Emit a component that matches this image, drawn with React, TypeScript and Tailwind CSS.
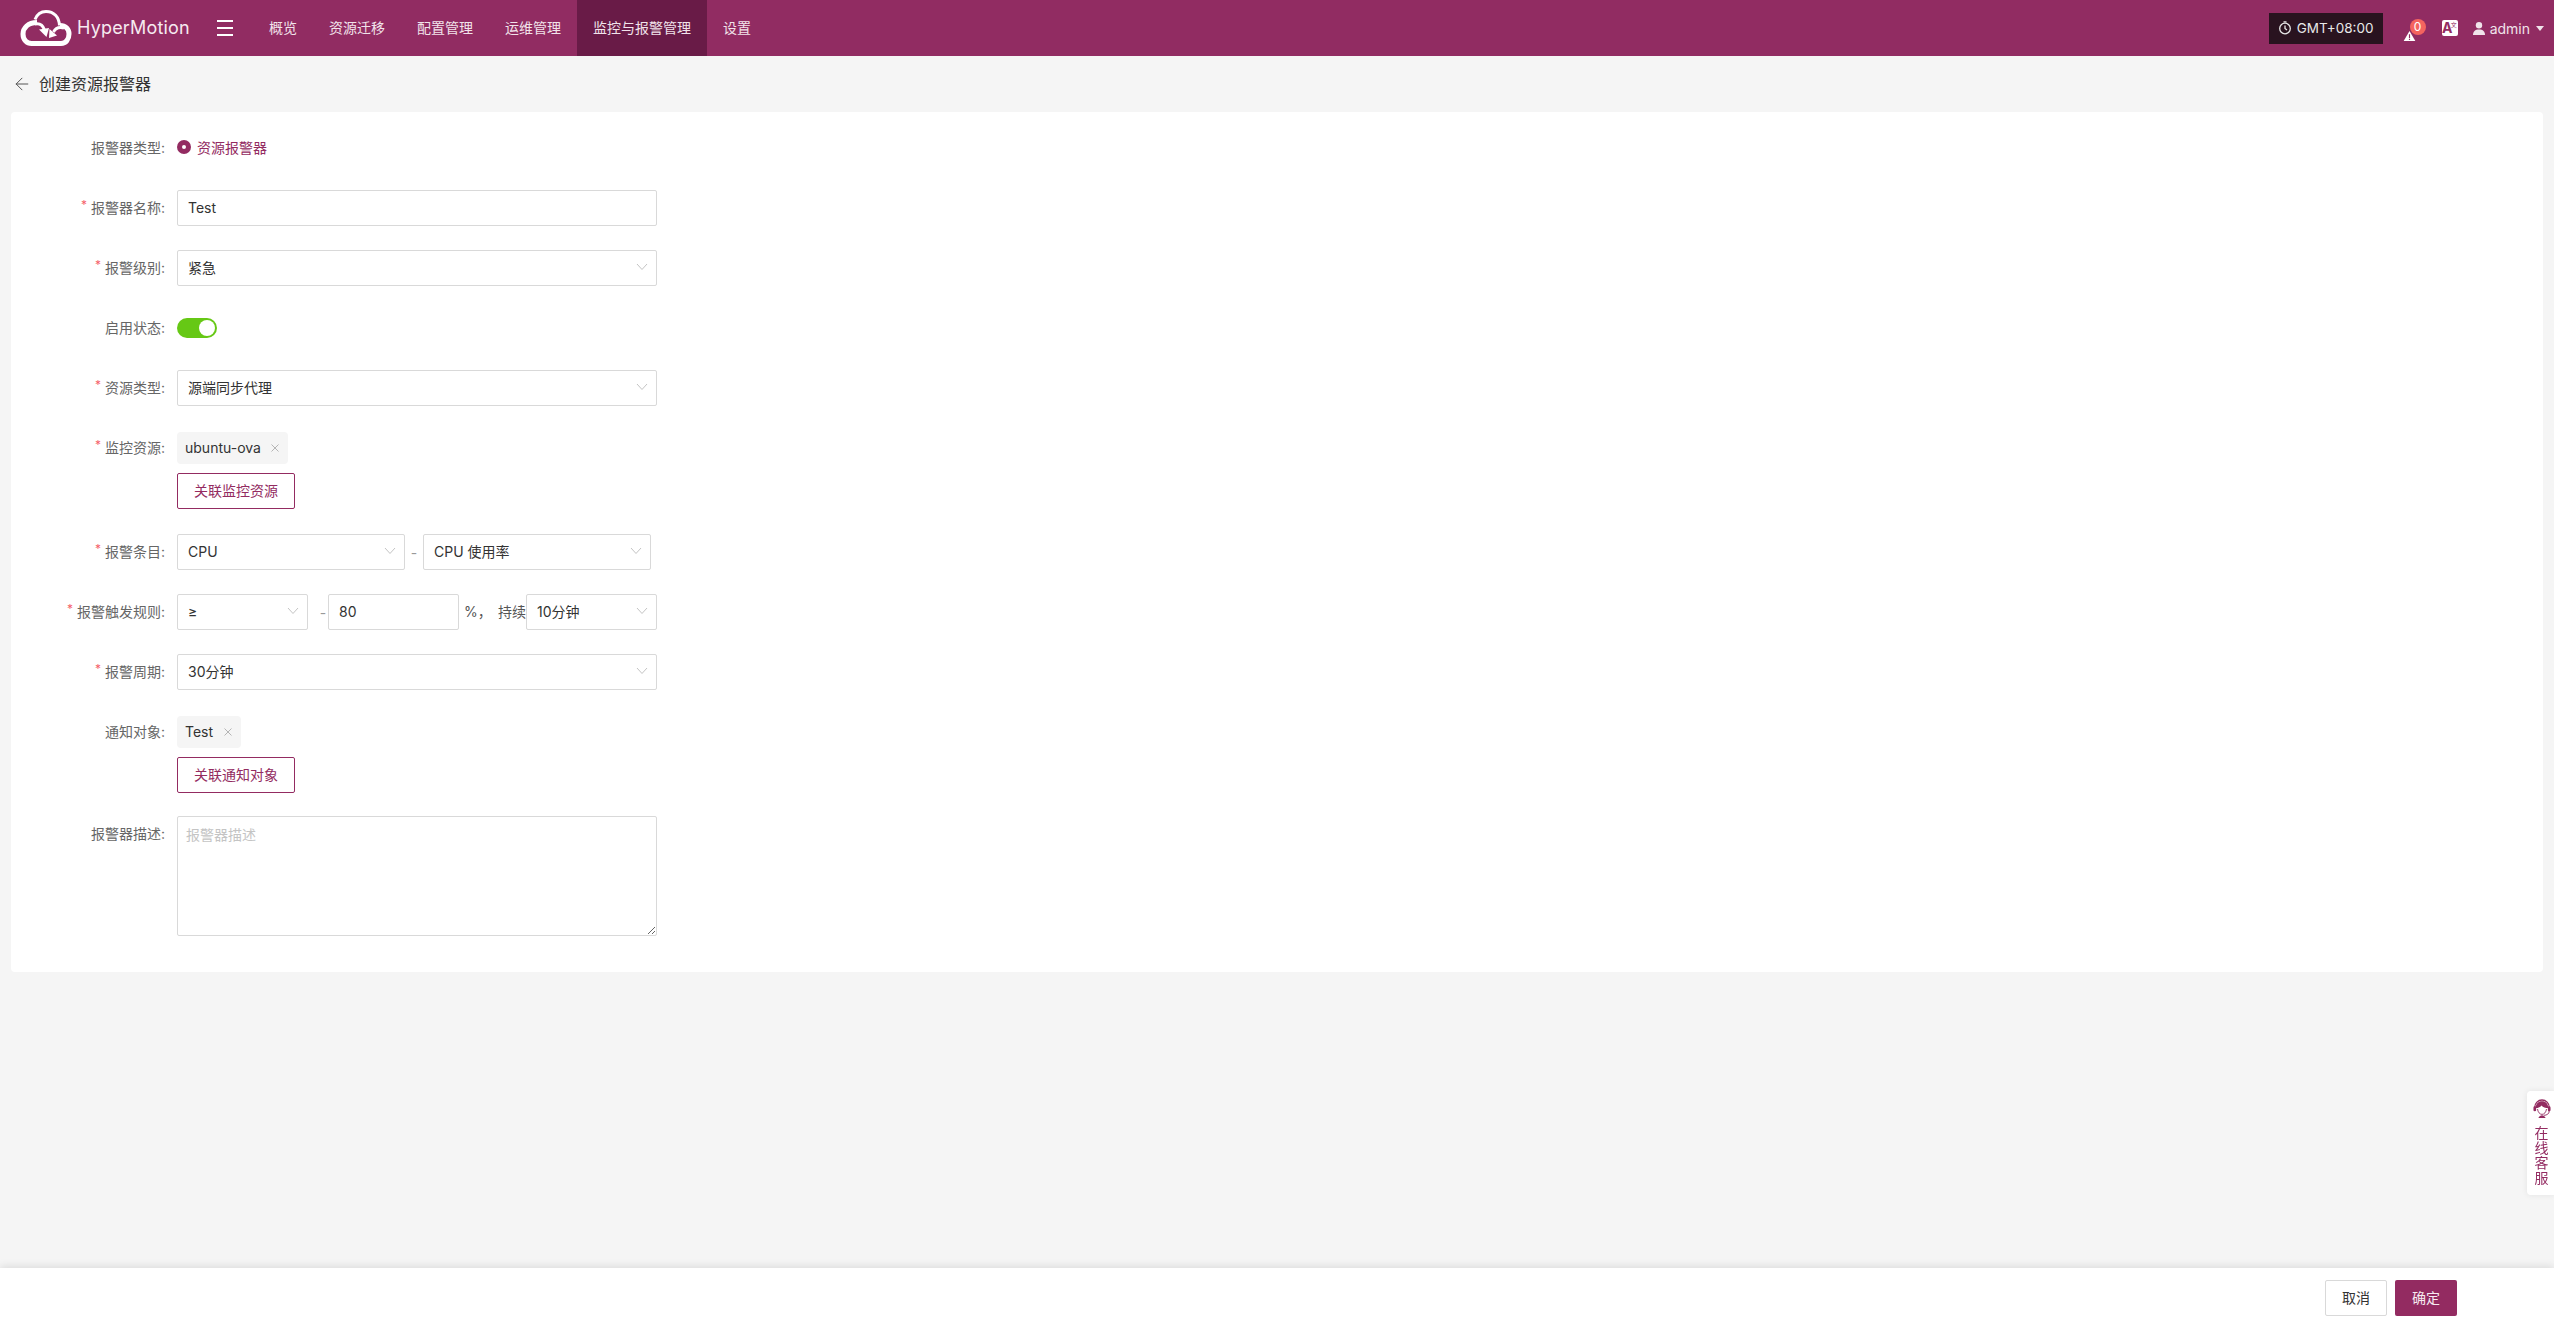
import { ArrowLeft } from 'lucide-react'
import type { ReactNode } from 'react'

const NAV = ['概览', '资源迁移', '配置管理', '运维管理', '监控与报警管理', '设置']

function Chevron() {
  return (
    <svg width="12" height="8" viewBox="0 0 12 8" fill="none" stroke="#c4c4c4" strokeWidth="1" className="absolute right-[8px] top-[12px]">
      <path d="M1 1l5 5.5L11 1" />
    </svg>
  )
}

function Select({ value, width = 'w-[480px]' }: { value: string; width?: string }) {
  return (
    <div className={`relative flex h-9 shrink-0 items-center rounded-[2px] border border-[#d9d9d9] bg-white pb-[2px] pl-[10px] text-[#333] ${width}`}>
      {value}
      <Chevron />
    </div>
  )
}

function Tag({ text, width }: { text: string; width: string }) {
  return (
    <div className={`mt-[2px] flex h-8 items-center justify-between rounded-[4px] bg-[#f5f5f5] pl-2 pr-[8px] text-[#333] ${width}`}>
      <span className="-mt-[2px]">{text}</span>
      <svg width="10" height="10" viewBox="0 0 10 10" stroke="#b5b5b5" strokeWidth="1">
        <path d="M1.5 1.5l7 7M8.5 1.5l-7 7" />
      </svg>
    </div>
  )
}

function LinkButton({ text }: { text: string }) {
  return (
    <div className="mt-[9px] flex h-9 w-[118px] items-center justify-center rounded-[2px] border border-[#932b61] bg-white pb-[1px] text-[#932b61]">
      {text}
    </div>
  )
}

function Row({ label, required, children, className }: { label: string; required?: boolean; children: ReactNode; className?: string }) {
  return (
    <div className={`flex items-start ${className ?? 'mb-6'}`}>
      <div className="flex h-9 w-[154px] items-center justify-end pb-[2px] text-[#666]">
        {required && <span className="relative -top-[2px] mr-[4px] text-[12px] text-[#f5616a]">*</span>}
        {label}:
      </div>
      <div className="ml-3">{children}</div>
    </div>
  )
}

function Logo() {
  return (
    <svg width="52" height="37" viewBox="0 0 52 37" fill="none" stroke="#fff" className="shrink-0">
      {/* cloud body, open at the top between the two lobes */}
      <path d="M17 12.500C8 12.500 3 18 3 24c0 6 4 9.500 8.500 9.500H41c5 0 8-4.500 8-9.500 0-5-3.500-8.500-9-8.500" strokeWidth="5" />
      {/* top arc */}
      <path d="M15 9.500C17 4.500 21 1.500 26 1.500c8 0 13 5.500 13.500 14" strokeWidth="3" />
      {/* left swirl and arrow head */}
      <path d="M15 14c5-1 8 1.500 9.500 6" strokeWidth="3" />
      <path d="M19 19.500l10-1.500-2.500 9z" fill="#fff" stroke="none" />
      {/* right swirl and arrow head */}
      <path d="M44 18c-5-1.500-8.500 0-10.500 4" strokeWidth="3" />
      <path d="M29.500 19l7.500 6.500-8 2.500z" fill="#fff" stroke="none" />
    </svg>
  )
}

function AgentIcon() {
  return (
    <svg width="18" height="20" viewBox="0 0 20 22" fill="none" className="ml-[1px] shrink-0">
      <path d="M2 9a8 8 0 0 1 16 0" stroke="#932b61" strokeWidth="1.500" />
      <path d="M3 10C3 5.500 6 2.500 10 2.500s7 3 7 7.500c-3 0-6-.8-7.500-3C8.500 8.500 6 10 3 10z" fill="#932b61" />
      <rect x="0.500" y="8" width="3" height="5.500" rx="1.500" fill="#932b61" />
      <rect x="16.500" y="8" width="3" height="5.500" rx="1.500" fill="#932b61" />
      <path d="M5 11c.5 3.500 2.500 6 5 6s4.500-2.500 5-6" stroke="#932b61" strokeWidth="1" />
      <path d="M18 13c0 3.500-2.500 5-6 5" stroke="#932b61" strokeWidth="1" />
      <path d="M6 21c1-2 2.500-3 4-3s3 1 4 3z" fill="#932b61" />
    </svg>
  )
}

function HeaderRight() {
  return (
    <div className="ml-auto flex items-center">
      <div className="flex h-[31px] w-[114px] items-center justify-center gap-[5px] bg-[#29131f] text-[#e8e8e8]">
        <svg width="14" height="14" viewBox="0 0 14 14" fill="none" stroke="#e8e8e8" strokeWidth="1.300">
          <circle cx="7" cy="7.500" r="5.300" />
          <path d="M7 4.500v3l2 1.500M5.500 .8h3" />
        </svg>
        <span className="text-[13.500px]">GMT+08:00</span>
      </div>
      <div className="relative ml-[20px] h-4 w-[12px]">
        <svg width="13" height="10" viewBox="0 0 14 12" className="absolute bottom-[-5px] left-0">
          <path d="M7 0l7 12H0z" fill="#fff" />
          <path d="M6.300 4h1.400v4.500H6.300zM6.300 9.300h1.400v1.400H6.300z" fill="#932b61" />
        </svg>
        <span className="absolute -top-[1px] left-[7px] flex h-4 w-4 items-center justify-center rounded-full bg-[#f4645f] text-[12px] leading-none text-white">0</span>
      </div>
      <div className="relative ml-[27px] flex h-4 w-4 items-center justify-center rounded-[2px] bg-white text-[14px] font-bold leading-none text-[#932b61]">
        <span className="-ml-[5px]">A</span>
        <span className="absolute right-[1px] top-[2px] text-[6px] font-normal leading-none">文</span>
      </div>
      <svg width="12" height="13" viewBox="0 0 12 13" fill="#f0e4ea" className="ml-[15px]">
        <circle cx="6" cy="3.300" r="3.200" />
        <path d="M0 13c0-3.500 2-5.500 6-5.500s6 2 6 5.500z" />
      </svg>
      <span className="ml-[5px] text-[#f0e4ea]">admin</span>
      <svg width="8" height="5" viewBox="0 0 8 5" fill="#f0e4ea" className="ml-[6px] mr-[10px]">
        <path d="M0 0h8L4 5z" />
      </svg>
    </div>
  )
}

export default function App() {
  return (
    <div className="flex h-screen flex-col overflow-hidden bg-[#f5f5f5] font-['Inter','Noto_Sans_CJK_SC',sans-serif] text-[14px]">
      {/* Top bar */}
      <header className="flex h-14 shrink-0 items-center bg-[#912c62] text-white">
        <div className="ml-5 flex w-[233px] shrink-0 items-center">
          <Logo />
          <span className="ml-[5px] -mt-[2px] text-[18px] tracking-[0.01em] text-[#f6eaf0]">HyperMotion</span>
          <div className="ml-[27px] flex h-4 w-4 shrink-0 flex-col justify-between">
            <div className="h-[2px] bg-white" />
            <div className="h-[2px] bg-white" />
            <div className="h-[2px] bg-white" />
          </div>
        </div>
        <nav className="flex h-full">
          {NAV.map((item, i) => (
            <div key={item} className={`flex h-full items-center px-4 pb-[1px] ${i === 4 ? 'bg-[#691b47]' : ''} text-[#f1e3ea]`}>
              {item}
            </div>
          ))}
        </nav>
        <HeaderRight />
      </header>

      <main className="flex-1 px-[11px]">
        <div className="flex h-14 items-center pl-[1px] text-[16px] text-[#333]">
          <ArrowLeft size={20} strokeWidth={1.200} className="text-[#555]" />
          <span className="ml-[7px]">创建资源报警器</span>
        </div>

        <div className="rounded-[4px] bg-white pb-9 pt-[18px]">
          <Row label="报警器类型">
            <div className="flex h-9 items-center pb-[2px] text-[#932b61]">
              <span className="flex h-[14px] w-[14px] items-center justify-center rounded-full bg-[#932b61]">
                <span className="h-1 w-1 rounded-full bg-white" />
              </span>
              <span className="ml-[6px]">资源报警器</span>
            </div>
          </Row>

          <Row label="报警器名称" required>
            <input
              readOnly
              value="Test"
              className="h-9 w-[480px] rounded-[2px] border border-[#d9d9d9] bg-white pb-[2px] pl-[10px] text-[#333] outline-none"
            />
          </Row>

          <Row label="报警级别" required>
            <Select value="紧急" />
          </Row>

          <Row label="启用状态">
            <div className="flex h-9 items-center">
              <div className="flex h-5 w-10 items-center justify-end rounded-full bg-[#66c815] pr-[2px]">
                <div className="h-4 w-4 rounded-full bg-white" />
              </div>
            </div>
          </Row>

          <Row label="资源类型" required>
            <Select value="源端同步代理" />
          </Row>

          <Row label="监控资源" required className="mb-[25px]">
            <Tag text="ubuntu-ova" width="w-[111px]" />
            <LinkButton text="关联监控资源" />
          </Row>

          <Row label="报警条目" required>
            <div className="flex items-center">
              <Select value="CPU" width="w-[228px]" />
              <span className="w-[18px] text-center text-[#999]">-</span>
              <Select value="CPU 使用率" width="w-[228px]" />
            </div>
          </Row>

          <Row label="报警触发规则" required>
            <div className="flex items-center">
              <Select value="≥" width="w-[131px]" />
              <span className="w-[20px] pl-[10px] text-center text-[#999]">-</span>
              <input
                readOnly
                value="80"
                className="h-9 w-[131px] rounded-[2px] border border-[#d9d9d9] bg-white pb-[2px] pl-[10px] text-[#333] outline-none"
              />
              <div className="ml-[5px] flex w-[62px] shrink-0 justify-between whitespace-nowrap pb-[2px] text-[#555]">
                <span>%，</span>
                <span>持续</span>
              </div>
              <Select value="10分钟" width="w-[131px]" />
            </div>
          </Row>

          <Row label="报警周期" required>
            <Select value="30分钟" />
          </Row>

          <Row label="通知对象" className="mb-[23px]">
            <Tag text="Test" width="w-16" />
            <LinkButton text="关联通知对象" />
          </Row>

          <Row label="报警器描述" className="">
            <textarea
              readOnly
              placeholder="报警器描述"
              className="block h-[120px] w-[480px] rounded-[2px] border border-[#d9d9d9] bg-white px-[8px] pb-[8px] pt-[7px] text-[#333] outline-none placeholder:text-[#c4c4c4]"
            />
          </Row>
        </div>
      </main>

      <footer className="flex h-[57px] shrink-0 items-center justify-end gap-2 bg-white pr-[97px] pt-[3px] shadow-[0_-2px_8px_rgba(0,0,0,0.1)]">
        <div className="flex h-9 w-[62px] items-center justify-center rounded-[2px] border border-[#d9d9d9] pb-[2px] text-[#333]">取消</div>
        <div className="flex h-9 w-[62px] items-center justify-center rounded-[2px] bg-[#932b61] pb-[2px] text-[#f6eaf0]">确定</div>
      </footer>

      {/* Floating support tab */}
      <div className="fixed right-0 top-[1091px] flex h-[104px] w-[27px] flex-col items-center rounded-l-[4px] bg-white pl-[2px] pt-2 text-[#932b61] shadow-[0_0_6px_rgba(0,0,0,0.08)]">
        <AgentIcon />
        <div className="mt-[6px] w-[14px] text-center leading-[15px]">在线客服</div>
      </div>
    </div>
  )
}
